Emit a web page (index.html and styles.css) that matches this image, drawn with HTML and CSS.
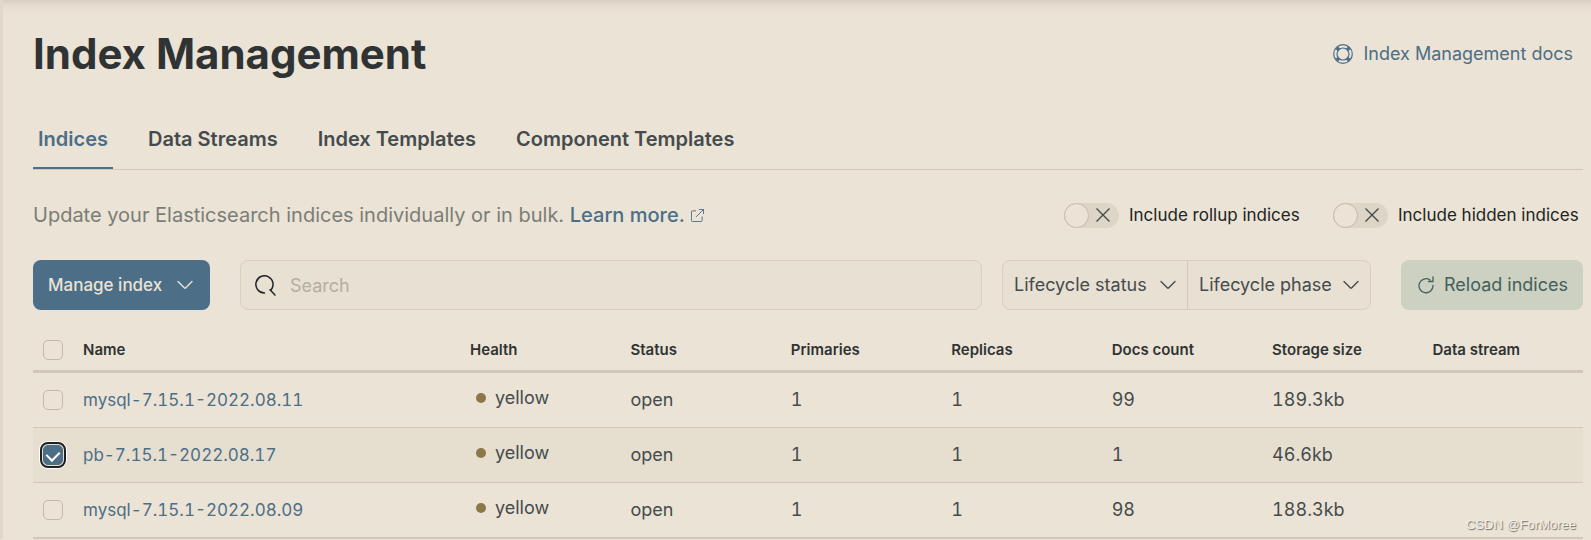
FILE: index.html
```html
<!DOCTYPE html>
<html lang="en">
<head>
    <meta charset="UTF-8">
    <meta name="viewport" content="width=device-width, initial-scale=1.0">
    <title>Index Management</title>
    <link rel="stylesheet" href="styles.css">
</head>
<body>
    <main class="page">
        <header class="page-header">
            <h1>Index Management</h1>
            <a class="docs-link" href="#docs">
                <svg width="20" height="20" viewBox="0 0 20 20" fill="none" stroke="currentColor">
                    <circle cx="10" cy="10" r="9.3" stroke-width="1.2"/>
                    <circle cx="10" cy="10" r="6" stroke-width="1.2"/>
                    <path d="M3 4.500 5.800 6.500M4.500 3 6.500 5.800M17 4.500 14.200 6.500M15.500 3 13.500 5.800M3 15.500 5.800 13.500M4.500 17 6.500 14.200M17 15.500 14.200 13.500M15.500 17 13.500 14.200" stroke-width="1.800"/>
                </svg>
                Index Management docs
            </a>
        </header>

        <nav class="tabs">
            <a class="tab active" href="#indices">Indices</a>
            <a class="tab" href="#data-streams">Data Streams</a>
            <a class="tab" href="#index-templates">Index Templates</a>
            <a class="tab" href="#component-templates">Component Templates</a>
        </nav>

        <div class="intro">
            <p>Update your Elasticsearch indices individually or in bulk.
                <a href="#learn-more">Learn more.<svg width="13" height="13" viewBox="0 0 14 14" fill="none" stroke="currentColor"><path d="M5.500 2H1.500a1 1 0 0 0-1 1v9.500a1 1 0 0 0 1 1H11a1 1 0 0 0 1-1V8M8.500.5h5V5.500M13.500.5 5.500 8.500"/></svg></a>
            </p>
            <div class="switches">
                <label class="switch">
                    <input type="checkbox">
                    <span class="track"><span class="thumb"></span><svg width="14" height="14" viewBox="0 0 14 14" fill="none" stroke="currentColor" stroke-width="1.4"><path d="M.5.5l13 13M13.500.5l-13 13"/></svg></span>
                    Include rollup indices
                </label>
                <label class="switch">
                    <input type="checkbox">
                    <span class="track"><span class="thumb"></span><svg width="14" height="14" viewBox="0 0 14 14" fill="none" stroke="currentColor" stroke-width="1.4"><path d="M.5.5l13 13M13.500.5l-13 13"/></svg></span>
                    Include hidden indices
                </label>
            </div>
        </div>

        <div class="toolbar">
            <button class="btn btn-primary" type="button">
                Manage index
                <svg width="16" height="10" viewBox="0 0 16 10" fill="none" stroke="currentColor" stroke-width="1.4" stroke-linecap="round"><path d="M1 1.500l6.500 6.500q.5.5 1 0L15 1.500"/></svg>
            </button>
            <div class="search">
                <svg width="21" height="21" viewBox="0 0 21 21" fill="none" stroke="currentColor" stroke-width="1.500" stroke-linecap="round"><path d="M9.500 18A8.600 8.600 0 1 1 15.800 15.200M15 14.800l5 5.200"/></svg>
                <input type="search" placeholder="Search" aria-label="Search indices">
            </div>
            <div class="filters">
                <button class="filter" type="button">
                    Lifecycle status
                    <svg width="16" height="10" viewBox="0 0 16 10" fill="none" stroke="currentColor" stroke-width="1.4" stroke-linecap="round"><path d="M1 1.500l6.500 6.500q.5.5 1 0L15 1.500"/></svg>
                </button>
                <button class="filter" type="button">
                    Lifecycle phase
                    <svg width="16" height="10" viewBox="0 0 16 10" fill="none" stroke="currentColor" stroke-width="1.4" stroke-linecap="round"><path d="M1 1.500l6.500 6.500q.5.5 1 0L15 1.500"/></svg>
                </button>
            </div>
            <button class="btn btn-reload" type="button">
                <svg width="16" height="18" viewBox="0 0 16 18" fill="none" stroke="currentColor" stroke-width="1.3" stroke-linecap="round"><path d="M12 4A7 7 0 1 0 15 9.500M10.500 5.500h4.500V1"/></svg>
                Reload indices
            </button>
        </div>

        <table class="indices">
            <thead>
                <tr>
                    <th class="check"><input type="checkbox" aria-label="Select all rows"></th>
                    <th class="name">Name</th>
                    <th>Health</th>
                    <th>Status</th>
                    <th>Primaries</th>
                    <th>Replicas</th>
                    <th>Docs count</th>
                    <th>Storage size</th>
                    <th>Data stream</th>
                </tr>
            </thead>
            <tbody>
                <tr>
                    <td class="check"><input type="checkbox" aria-label="Select mysql-7.15.1-2022.08.11"></td>
                    <td><a href="#mysql-11">mysql-7.15.1-2022.08.11</a></td>
                    <td class="health"><span>yellow</span></td>
                    <td>open</td>
                    <td>1</td>
                    <td>1</td>
                    <td>99</td>
                    <td>189.3kb</td>
                    <td></td>
                </tr>
                <tr class="selected">
                    <td class="check"><input type="checkbox" aria-label="Select pb-7.15.1-2022.08.17" checked></td>
                    <td><a href="#pb-17">pb-7.15.1-2022.08.17</a></td>
                    <td class="health"><span>yellow</span></td>
                    <td>open</td>
                    <td>1</td>
                    <td>1</td>
                    <td>1</td>
                    <td>46.6kb</td>
                    <td></td>
                </tr>
                <tr>
                    <td class="check"><input type="checkbox" aria-label="Select mysql-7.15.1-2022.08.09"></td>
                    <td><a href="#mysql-09">mysql-7.15.1-2022.08.09</a></td>
                    <td class="health"><span>yellow</span></td>
                    <td>open</td>
                    <td>1</td>
                    <td>1</td>
                    <td>98</td>
                    <td>188.3kb</td>
                    <td></td>
                </tr>
            </tbody>
        </table>
    </main>
    <div class="watermark">CSDN @ForMoree</div>
</body>
</html>
```
FILE: styles.css
```css
* {
    box-sizing: border-box;
}
body {
    margin: 0;
    position: relative;
    font-family: Inter, "Liberation Sans", sans-serif;
    font-size: 18px;
    line-height: 24px;
    color: #454b4d;
    background-color: #ebe3d5;
}
a {
    color: #4c6e87;
    text-decoration: none;
}
button,
input {
    font: inherit;
    color: inherit;
}
svg {
    flex: none;
}
.page {
    padding: 24px 8px 0 30px;
    border-left: 3px solid #e1d8ca;
    background: linear-gradient(#d8cfc1, #e5dccf 5px, #ebe3d5 15px);
}
.page-header {
    display: flex;
    justify-content: space-between;
    align-items: center;
    height: 60px;
    padding-right: 10px;
}
h1 {
    margin: 0;
    font-size: 42px;
    line-height: 60px;
    font-weight: 700;
    color: #303333;
}
.docs-link {
    display: flex;
    align-items: center;
    gap: 10px;
}

/* Tabs */
.tabs {
    display: flex;
    gap: 30px;
    margin-top: 24px;
    border-bottom: 1px solid #d2c7b9;
}
.tab {
    padding: 17px 5px 14px;
    line-height: 28px;
    font-size: 20px;
    font-weight: 600;
    color: #454b4d;
    border-bottom: 2px solid transparent;
}
.tab.active {
    color: #4c6e87;
    border-bottom-color: #4c6e87;
}

/* Description and switches */
.intro {
    display: flex;
    justify-content: space-between;
    align-items: center;
    height: 30px;
    margin: 30px 0;
}
.intro p {
    margin: 0;
    font-size: 20px;
    line-height: 30px;
    color: #7b7d77;
}
.intro p a {
    font-weight: 500;
}
.intro p svg {
    margin-left: 6px;
}
.switches {
    display: grid;
    grid-template-columns: 239px 250px;
    gap: 30px;
    font-size: 17px;
}
.switch {
    display: flex;
    align-items: center;
    gap: 10px;
    color: #202424;
}
.switch input {
    position: absolute;
    opacity: 0;
}
.track {
    display: flex;
    align-items: center;
    gap: 7px;
    width: 55px;
    height: 25px;
    border-radius: 13px;
    background-color: #ddd6c6;
    color: #454b4d;
}
.thumb {
    width: 25px;
    height: 25px;
    border: 1px solid #c6b9ac;
    border-radius: 50%;
    background-color: #ebe3d5;
}

/* Toolbar */
.toolbar {
    display: flex;
    height: 50px;
}
.btn {
    display: flex;
    align-items: center;
    justify-content: space-between;
    padding: 0 15px;
    border: 0;
    border-radius: 8px;
    white-space: nowrap;
}
.btn-primary {
    width: 177px;
    padding-right: 17px;
    font-size: 17px;
    font-weight: 500;
    color: #ebe3d5;
    background-color: #4c6e87;
}
.btn-reload {
    width: 182px;
    padding-left: 17px;
    color: #43605a;
    background-color: #ccd1c2;
}
.search {
    display: flex;
    flex: 1;
    align-items: center;
    gap: 14px;
    margin: 0 20px 0 30px;
    padding: 0 14px;
    border: 1px solid #d8cfc1;
    border-radius: 8px;
    background-color: #e8e0d2;
    color: #202424;
}
.search input {
    flex: 1;
    min-width: 0;
    padding: 2px 0 0;
    border: 0;
    outline: 0;
    background: none;
}
.search input::placeholder {
    color: #b3afa3;
}
.filters {
    display: grid;
    grid-template-columns: 184px 183px;
    margin-right: 30px;
    border: 1px solid #d8cfc1;
    border-radius: 8px;
    background-color: #e8e0d2;
}
.filter {
    display: flex;
    align-items: center;
    justify-content: space-between;
    padding: 0 11px;
    border: 0;
    background: none;
    white-space: nowrap;
}
.filter + .filter {
    border-left: 1px solid #d2c7b9;
}

/* Table */
.indices {
    width: 100%;
    margin-top: 20px;
    border-collapse: separate;
    border-spacing: 0;
    table-layout: fixed;
    text-align: left;
}
.indices th {
    height: 43px;
    padding: 0 10px;
    font-size: 15px;
    line-height: 20px;
    font-weight: 600;
    color: #303333;
    border-bottom: 3px solid #d2c7b9;
}
.indices td {
    height: 55px;
    padding: 0 10px;
    font-variant-numeric: tabular-nums;
    border-bottom: 1px solid #d2c7b9;
}
.indices td a {
    font-size: 17px;
}
.indices tr:last-child td {
    height: 56px;
    border-bottom-width: 2px;
}
.indices .check {
    width: 40px;
}
.indices .name {
    width: 387px;
}
.selected td {
    background-color: #e6decf;
}
.check input {
    display: block;
    appearance: none;
    width: 20px;
    height: 20px;
    margin: 0;
    border: 1px solid #c6b9ac;
    border-radius: 5px;
}
.check input:checked {
    border-color: #4c6e87;
    background: #4c6e87;
    outline: 2px solid #1d2020;
    outline-offset: 1px;
    box-shadow: 0 0 0 1px #e6decf, 0 0 0 4px #fff;
}
.check input:checked::before {
    content: "";
    display: block;
    width: 12px;
    height: 7px;
    margin: 4px 3px;
    border-left: 2px solid #fff;
    border-bottom: 2px solid #fff;
    transform: rotate(-45deg);
}
/* the generated box sits in the input's own 18px content area */
.check input:checked {
    display: flex;
    align-items: flex-start;
}
.health span {
    display: flex;
    align-items: center;
    gap: 9px;
    padding: 0 0 4px 6px;
}
.health span::before {
    content: "";
    width: 10px;
    height: 10px;
    border-radius: 50%;
    background-color: #8b7848;
}

.watermark {
    position: absolute;
    right: 15px;
    bottom: 4px;
    font-family: "Liberation Sans", sans-serif;
    font-size: 13px;
    line-height: 20px;
    color: #f3efe8;
    text-shadow: 1px 1px 1px #6f6b64;
}
```
